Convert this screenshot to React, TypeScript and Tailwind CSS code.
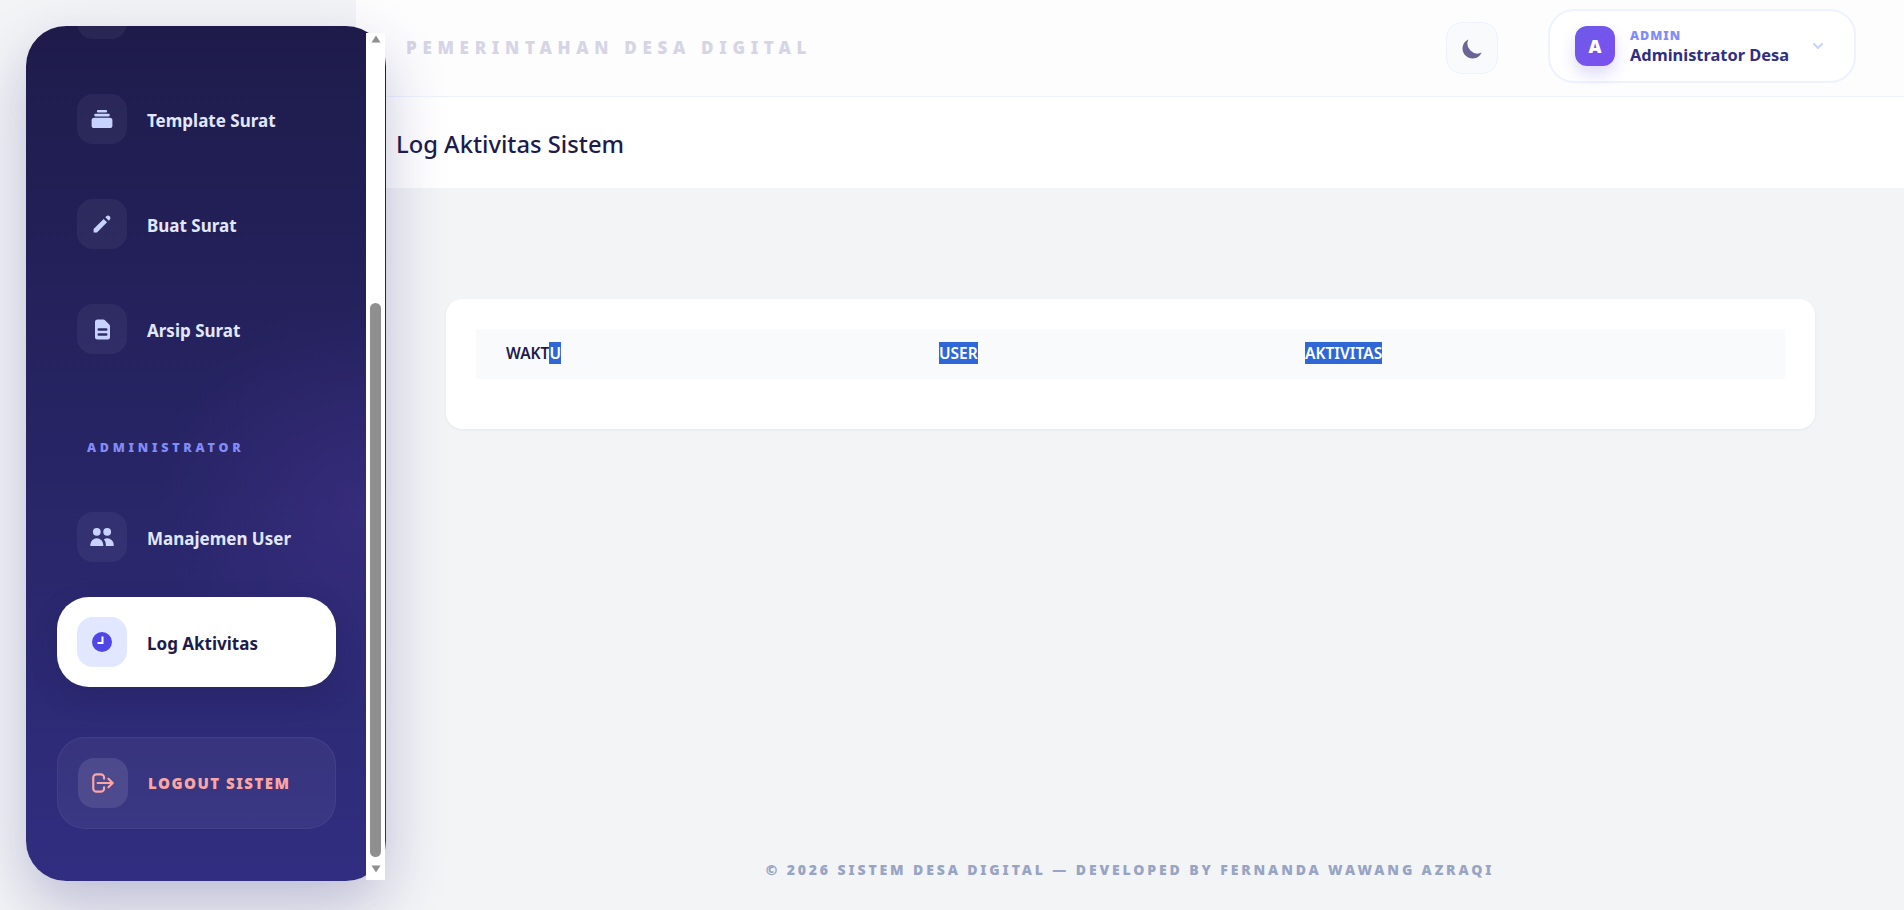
import type { ReactNode } from "react";
import {
  HiChevronDown,
  HiCollection,
  HiDocumentText,
  HiMoon,
  HiOutlineLogout,
  HiPencil,
  HiUsers,
} from "react-icons/hi";

function NavItem({ icon, label, active }: { icon?: ReactNode; label: string; active?: boolean }) {
  return (
    <div
      className={
        active
          ? "flex h-[90px] items-center gap-5 rounded-[32px] bg-white px-5 shadow-[0_10px_25px_rgba(30,27,75,0.25)]"
          : "flex h-[90px] items-center gap-5 px-5"
      }
    >
      <div
        className={
          active
            ? "flex h-[50px] w-[50px] shrink-0 items-center justify-center rounded-2xl bg-[#e0e7ff] text-[#4f46e5]"
            : "flex h-[50px] w-[50px] shrink-0 items-center justify-center rounded-2xl bg-white/5 text-[#c7d2fe]"
        }
      >
        {icon}
      </div>
      <span
        className={
          active ? "pt-[3px] text-[17px] font-bold text-[#1e1b4b]" : "pt-[3px] text-[17px] font-bold text-[#e0e7ff]"
        }
      >
        {label}
      </span>
    </div>
  );
}

function ClockIcon() {
  return (
    <svg width="24" height="24" viewBox="0 0 24 24">
      <circle cx="12" cy="12" r="10" fill="currentColor" />
      <path d="M12.5 6.5V13H7.5" fill="none" stroke="white" strokeWidth="2" />
    </svg>
  );
}

function Sidebar() {
  return (
    <aside className="relative z-10 ml-[26px] mr-[-30px] mt-[26px] flex h-[855px] w-[360px] shrink-0 rounded-[40px] bg-gradient-to-b from-[#1e1b4b] to-[#312e81] shadow-[0_25px_60px_rgba(49,46,129,0.28)]">
      <div className="relative flex-1 overflow-hidden rounded-[40px]">
        <div className="pointer-events-none absolute inset-0 bg-[radial-gradient(circle_at_100%_56%,rgba(88,60,170,0.28),transparent_35%)]" />
        <nav className="relative -mt-[57px] flex flex-col pl-[31px] pr-[30px]">
          <div className="flex flex-col gap-[15px]">
            <NavItem label="" />
            <NavItem icon={<HiCollection size={26} />} label="Template Surat" />
            <NavItem icon={<HiPencil size={24} />} label="Buat Surat" />
            <NavItem icon={<HiDocumentText size={25} />} label="Arsip Surat" />
          </div>
          <p className="mb-[35px] ml-[30px] mt-[65px] text-[12.5px] font-black leading-[18px] tracking-[0.3em] text-[#818cf8]">
            ADMINISTRATOR
          </p>
          <div className="flex flex-col gap-[15px]">
            <NavItem icon={<HiUsers size={26} />} label="Manajemen User" />
            <NavItem icon={<ClockIcon />} label="Log Aktivitas" active />
          </div>
          <div className="mt-[50px] flex h-[92px] items-center gap-5 rounded-[28px] border border-white/5 bg-white/5 px-5">
            <div className="flex h-[50px] w-[50px] shrink-0 items-center justify-center rounded-2xl bg-white/10 text-[#fca5a5]">
              <HiOutlineLogout size={26} />
            </div>
            <span className="text-[15px] font-black tracking-[0.1em] text-[#fca5a5]">LOGOUT SISTEM</span>
          </div>
        </nav>
      </div>
      {/* scrollbar */}
      <div className="mb-px mr-px mt-[7px] flex w-[19px] shrink-0 flex-col items-center bg-white">
        <svg width="10" height="8" viewBox="0 0 10 8" className="mt-[2px] text-[#8f8f8f]">
          <path d="M5 0.5 9.5 7.5H0.5Z" fill="currentColor" />
        </svg>
        <div className="mt-[260px] h-[554px] w-[11px] rounded-full bg-[#8f8f8f]" />
        <svg width="10" height="8" viewBox="0 0 10 8" className="mt-[8px] text-[#8f8f8f]">
          <path d="M0.5 0.5H9.5L5 7.5Z" fill="currentColor" />
        </svg>
      </div>
    </aside>
  );
}

function Header() {
  return (
    <header className="flex h-[97px] shrink-0 items-center border-b border-[#eef2ff] bg-[#fdfdfe] pl-[50px] pr-[48px]">
      <h2 className="text-[17px] font-black tracking-[0.335em] text-[#d6d5e5]">PEMERINTAHAN DESA DIGITAL</h2>
      <button className="ml-auto flex h-[52px] w-[52px] items-center justify-center rounded-2xl border border-[#eef2ff] bg-[#f8fafc] text-[#6a6596]">
        <HiMoon size={25} />
      </button>
      <div className="mb-[4px] ml-[50px] flex h-[74px] w-[308px] items-center rounded-[26px] border-2 border-[#eef2ff] bg-white pl-[25px]">
        <div className="flex h-10 w-10 items-center justify-center rounded-xl bg-gradient-to-br from-[#6d5be8] to-[#7c4fef] text-lg font-black text-white shadow-[0_8px_16px_rgba(79,70,229,0.2)]">
          A
        </div>
        <div className="ml-[15px] flex flex-col pt-[2px]">
          <span className="text-[12.5px] font-black leading-[16px] tracking-[0.08em] text-[#818cf8]">ADMIN</span>
          <span className="text-[16.4px] font-bold leading-[22px] text-[#312e81]">Administrator Desa</span>
        </div>
        <HiChevronDown size={20} className="ml-[19px] text-[#c7d2fe]" />
      </div>
    </header>
  );
}

function Selected({ children }: { children: ReactNode }) {
  return <span className="bg-[#3067d6] text-white">{children}</span>;
}

export default function App() {
  return (
    <div
      className="flex h-screen overflow-hidden bg-[#f3f4f6]"
      style={{ fontFamily: '"Noto Sans", "Open Sans", sans-serif' }}
    >
      <Sidebar />
      <main className="flex min-w-0 flex-1 flex-col">
        <Header />
        <div className="flex h-[91px] shrink-0 items-center bg-white pl-[40px]">
          <h1 className="pt-[4px] text-[23.75px] font-medium text-[#1e1b4b]">Log Aktivitas Sistem</h1>
        </div>
        <section className="flex-1 pl-[90px] pr-[89px] pt-[111px]">
          <div className="rounded-2xl bg-white px-[30px] pb-[50px] pt-[30px] shadow-[0_1px_3px_rgba(30,27,75,0.06)]">
            <table className="w-full table-fixed">
              <thead>
                <tr className="h-[50px] bg-[#f8fafc] text-left text-[15.5px] text-[#1e1b4b]">
                  <th className="w-[434px] pb-[1px] pl-[30px] font-semibold">
                    WAKT<Selected>U</Selected>
                  </th>
                  <th className="w-[366px] pb-[1px] pl-[29px] font-semibold">
                    <Selected>USER</Selected>
                  </th>
                  <th className="pb-[1px] pl-[29px] font-semibold">
                    <Selected>AKTIVITAS</Selected>
                  </th>
                </tr>
              </thead>
            </table>
          </div>
        </section>
        <footer className="pb-[30px] text-center text-[14px] font-black tracking-[0.205em] text-[#98a4c4]">
          © 2026 SISTEM DESA DIGITAL — DEVELOPED BY FERNANDA WAWANG AZRAQI
        </footer>
      </main>
    </div>
  );
}
